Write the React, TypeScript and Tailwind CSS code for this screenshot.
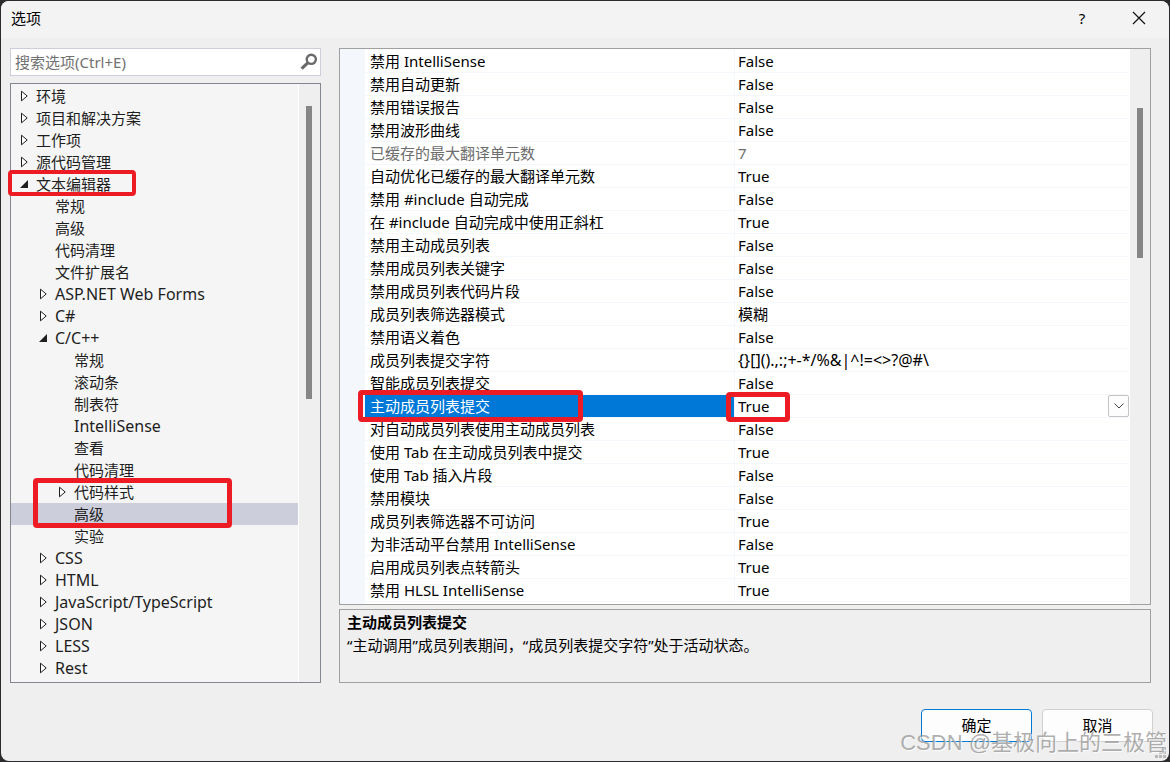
import { useState } from 'react';

type TreeNode = {
  label: string;
  level: 0 | 1 | 2;
  state?: 'open' | 'closed';
  selected?: boolean;
  mark?: 'single' | 'pair';
};

const TREE: TreeNode[] = [
  { label: '环境', level: 0, state: 'closed' },
  { label: '项目和解决方案', level: 0, state: 'closed' },
  { label: '工作项', level: 0, state: 'closed' },
  { label: '源代码管理', level: 0, state: 'closed' },
  { label: '文本编辑器', level: 0, state: 'open', mark: 'single' },
  { label: '常规', level: 1 },
  { label: '高级', level: 1 },
  { label: '代码清理', level: 1 },
  { label: '文件扩展名', level: 1 },
  { label: 'ASP.NET Web Forms', level: 1, state: 'closed' },
  { label: 'C#', level: 1, state: 'closed' },
  { label: 'C/C++', level: 1, state: 'open' },
  { label: '常规', level: 2 },
  { label: '滚动条', level: 2 },
  { label: '制表符', level: 2 },
  { label: 'IntelliSense', level: 2 },
  { label: '查看', level: 2 },
  { label: '代码清理', level: 2 },
  { label: '代码样式', level: 2, state: 'closed', mark: 'pair' },
  { label: '高级', level: 2, selected: true },
  { label: '实验', level: 2 },
  { label: 'CSS', level: 1, state: 'closed' },
  { label: 'HTML', level: 1, state: 'closed' },
  { label: 'JavaScript/TypeScript', level: 1, state: 'closed' },
  { label: 'JSON', level: 1, state: 'closed' },
  { label: 'LESS', level: 1, state: 'closed' },
  { label: 'Rest', level: 1, state: 'closed' },
];

type Option = { name: string; value: string; disabled?: boolean; selected?: boolean };

const OPTIONS: Option[] = [
  { name: '禁用 IntelliSense', value: 'False' },
  { name: '禁用自动更新', value: 'False' },
  { name: '禁用错误报告', value: 'False' },
  { name: '禁用波形曲线', value: 'False' },
  { name: '已缓存的最大翻译单元数', value: '7', disabled: true },
  { name: '自动优化已缓存的最大翻译单元数', value: 'True' },
  { name: '禁用 #include 自动完成', value: 'False' },
  { name: '在 #include 自动完成中使用正斜杠', value: 'True' },
  { name: '禁用主动成员列表', value: 'False' },
  { name: '禁用成员列表关键字', value: 'False' },
  { name: '禁用成员列表代码片段', value: 'False' },
  { name: '成员列表筛选器模式', value: '模糊' },
  { name: '禁用语义着色', value: 'False' },
  { name: '成员列表提交字符', value: '{}[]().,:;+-*/%&|^!=<>?@#\\' },
  { name: '智能成员列表提交', value: 'False' },
  { name: '主动成员列表提交', value: 'True', selected: true },
  { name: '对自动成员列表使用主动成员列表', value: 'False' },
  { name: '使用 Tab 在主动成员列表中提交', value: 'True' },
  { name: '使用 Tab 插入片段', value: 'False' },
  { name: '禁用模块', value: 'False' },
  { name: '成员列表筛选器不可访问', value: 'True' },
  { name: '为非活动平台禁用 IntelliSense', value: 'False' },
  { name: '启用成员列表点转箭头', value: 'True' },
  { name: '禁用 HLSL IntelliSense', value: 'True' },
];

const INDENT = ['pl-2', 'pl-[27px]', 'pl-[46px]'];

// Labels and symbol lists without Chinese characters are set one size larger.
const isLatin = (text: string) => /^[\x20-\x7e]+$/.test(text);

function Arrow({ state }: { state?: 'open' | 'closed' }) {
  return (
    <svg className="h-3 w-3 shrink-0" viewBox="0 0 12 12" aria-hidden="true">
      {state === 'closed' && (
        <path d="M2.5 1.2v9.6L8.2 6z" fill="#fff" stroke="#1e1e1e" strokeWidth="1" />
      )}
      {state === 'open' && <path d="M9 2v8H1z" fill="#1e1e1e" />}
    </svg>
  );
}

function TreeRow({ node }: { node: TreeNode }) {
  return (
    <li className="relative" role="treeitem" aria-selected={!!node.selected}>
      <button
        type="button"
        className={`flex h-[22px] w-full items-center gap-[5px] whitespace-nowrap text-left ${INDENT[node.level]} ${
          isLatin(node.label) ? 'text-[16px]' : ''
        } ${node.selected ? 'bg-[#cccedb]' : ''}`}
      >
        <Arrow state={node.state} />
        <span>{node.label}</span>
      </button>
      {node.mark === 'single' && (
        <span className="pointer-events-none absolute -left-[3px] -top-[3px] z-10 h-[26px] w-32 rounded-sm border-4 border-[#ed1c24]" />
      )}
      {node.mark === 'pair' && (
        <span className="pointer-events-none absolute -top-[3px] left-[22px] z-10 h-[50px] w-[199px] rounded-sm border-[5px] border-[#ed1c24]" />
      )}
    </li>
  );
}

function OptionRow({ option }: { option: Option }) {
  const [value, setValue] = useState(option.value);
  const tone = option.disabled ? 'text-[#6d6d6d]' : 'text-black';
  return (
    <tr className={`h-[23px] ${tone}`}>
      <th
        scope="row"
        className={`relative border-b border-r border-[#f4f7fc] p-0 pl-[5px] text-left font-normal ${
          option.selected ? 'bg-[#0078d7] text-white' : ''
        }`}
      >
        {option.selected ? <label htmlFor="active-option">{option.name}</label> : option.name}
        {option.selected && (
          <span className="pointer-events-none absolute -left-[7px] -top-[5px] z-10 h-8 w-[225px] rounded-sm border-[5px] border-[#ed1c24]" />
        )}
      </th>
      <td
        className={`relative border-b border-[#f4f7fc] p-0 pl-[3px] ${
          value.length > 5 ? 'text-[16px]' : ''
        }`}
      >
        {option.selected ? (
          <>
            <select
              id="active-option"
              value={value}
              onChange={(e) => setValue(e.target.value)}
              className="block h-[22px] w-full appearance-none bg-transparent p-0 leading-[22px] outline-none"
            >
              <option>True</option>
              <option>False</option>
            </select>
            <span className="pointer-events-none absolute right-0 top-0 flex h-[22px] w-[21px] items-center justify-center rounded-xs border border-[#c4c4c4] bg-[#fdfdfd]">
              <svg className="h-2 w-3" viewBox="0 0 12 8" fill="none" stroke="#444" aria-hidden="true">
                <path d="M1.5 1.5 6 6l4.5-4.5" />
              </svg>
            </span>
            <span className="pointer-events-none absolute -left-[9px] -top-[3px] z-10 h-[30px] w-16 rounded-sm border-[5px] border-[#ed1c24]" />
          </>
        ) : (
          value
        )}
      </td>
    </tr>
  );
}

export default function App() {
  return (
    <div className="min-h-screen bg-[#2b2a2d] p-px font-['Noto_Sans','Noto_Sans_CJK_SC',sans-serif] text-[15px] leading-[22px] text-black">
      <main className="relative flex min-h-[calc(100vh-2px)] flex-col overflow-hidden rounded-lg bg-[#efefef]">
        <header className="flex h-[37px] items-center bg-[#f3f3f3] pb-[3px] pl-[10px] pr-3">
          <h1 className="grow text-[15px]">选项</h1>
          <button type="button" aria-label="帮助" className="flex h-8 w-9 items-center justify-center">
            ?
          </button>
          <button type="button" aria-label="关闭" className="ml-[21px] flex h-8 w-9 items-center justify-center">
            <svg className="h-[14px] w-[14px]" viewBox="0 0 14 14" stroke="#111" strokeWidth="1.2" aria-hidden="true">
              <path d="M1 1l12 12M13 1 1 13" />
            </svg>
          </button>
        </header>

        <div className="flex grow gap-[18px] pl-[9px] pr-[18px] pt-[10px]">
          <section className="flex w-[311px] shrink-0 flex-col gap-[7px]">
            <div className="flex h-7 items-center border border-[#cccedb] bg-white pl-1 pr-[2px]">
              <input
                type="search"
                aria-label="搜索选项"
                placeholder="搜索选项(Ctrl+E)"
                className="min-w-0 grow bg-transparent outline-none placeholder:text-[#717171]"
              />
              <svg className="h-[18px] w-[18px] shrink-0" viewBox="0 0 18 18" fill="none" stroke="#6a6a6a" aria-hidden="true">
                <circle cx="11.3" cy="6.3" r="4.6" strokeWidth="2.4" />
                <path d="M7.8 9.8 1.6 15.6" strokeWidth="3.2" />
              </svg>
            </div>
            <div className="flex grow border border-[#828790] bg-[#f5f5f5]">
              <ul role="tree" className="min-w-0 grow pb-[3px] pt-px text-[#1e1e1e]">
                {TREE.map((node, i) => (
                  <TreeRow key={i} node={node} />
                ))}
              </ul>
              <div className="flex w-[22px] border-l border-white bg-[#efefef] pl-[7px] pt-[22px]">
                <div className="h-[293px] w-[6px] bg-[#868686]" />
              </div>
            </div>
          </section>

          <section className="flex min-w-0 grow flex-col gap-1">
            <div className="flex border border-[#a0a0a0] bg-white">
              <div className="w-[25px] shrink-0 bg-[#f4f7fc]" />
              <div className="min-w-0 grow pb-[2px] pr-px pt-px">
                <table className="w-full table-fixed border-separate border-spacing-0 whitespace-nowrap">
                  <colgroup>
                    <col className="w-[370px]" />
                    <col />
                  </colgroup>
                  <tbody>
                    {OPTIONS.map((option) => (
                      <OptionRow key={option.name} option={option} />
                    ))}
                  </tbody>
                </table>
              </div>
              <div className="flex w-5 shrink-0 justify-center bg-[#efefef] pt-[59px]">
                <div className="h-[150px] w-[6px] bg-[#868686]" />
              </div>
            </div>
            <div className="min-h-[74px] border border-[#a0a0a0] px-[7px] pt-px">
              <h2 className="text-[15px] font-bold leading-[23px]">主动成员列表提交</h2>
              <p>“主动调用”成员列表期间，“成员列表提交字符”处于活动状态。</p>
            </div>
          </section>
        </div>

        <footer className="flex justify-end gap-[10px] pb-[19px] pr-4 pt-[26px]">
          <button type="button" className="h-[33px] w-[111px] rounded border border-[#0078d4] bg-[#fdfdfd] pb-[2px]">
            确定
          </button>
          <button type="button" className="h-[33px] w-[111px] rounded border border-[#d0d0d0] bg-[#fdfdfd] pb-[2px]">
            取消
          </button>
        </footer>

        <svg className="pointer-events-none absolute bottom-[2px] right-[2px] h-3 w-3" viewBox="0 0 12 12" fill="#b8b8b8" aria-hidden="true">
          <path d="M8 0h3v3H8zM4 4h3v3H4zM8 4h3v3H8zM0 8h3v3H0zM4 8h3v3H4zM8 8h3v3H8z" />
        </svg>
        <p className="pointer-events-none absolute bottom-[2px] right-[2px] whitespace-nowrap font-['Liberation_Sans','Noto_Sans_CJK_SC',sans-serif] text-[22px] leading-8 text-[#8c8c8c]/70 [text-shadow:1px_1px_1px_#ffffffcc]">
          CSDN @基极向上的三极管
        </p>
      </main>
    </div>
  );
}
